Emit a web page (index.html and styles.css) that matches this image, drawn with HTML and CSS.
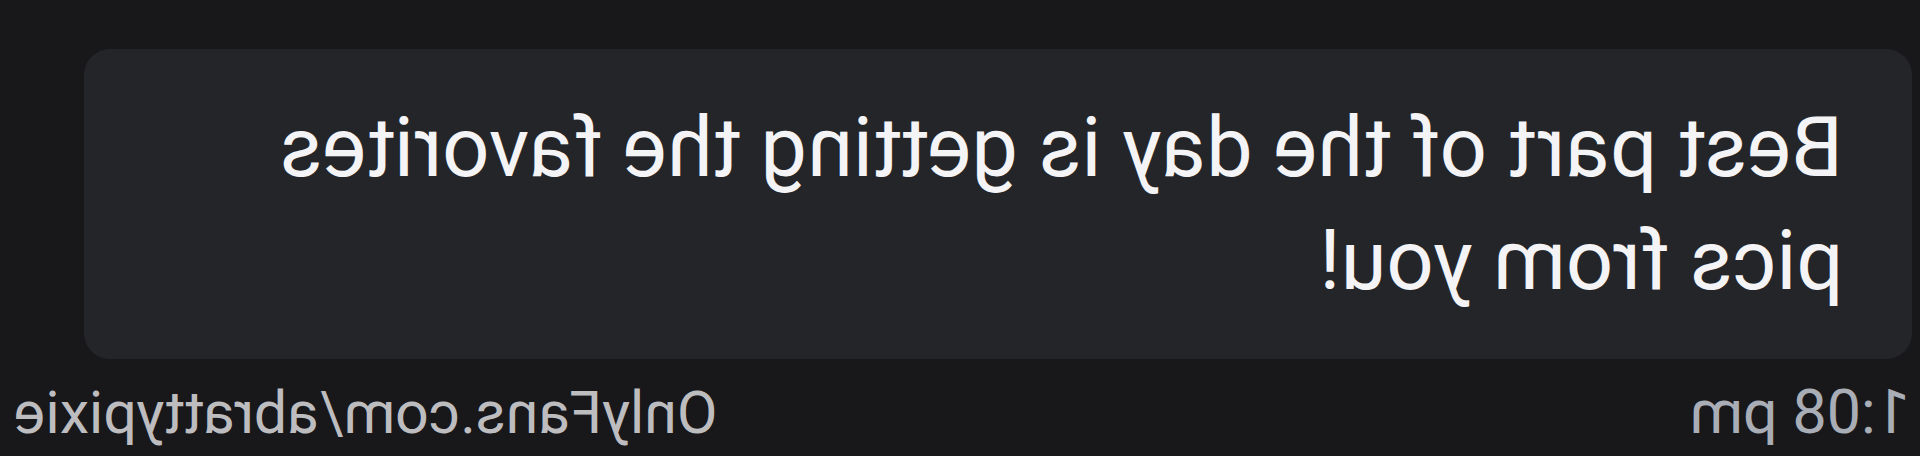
FILE: index.html
```html
<!DOCTYPE html>
<html lang="en">
<head>
<meta charset="utf-8">
<title>Message</title>
<link rel="stylesheet" href="styles.css">
</head>
<body>
<div class="screen">
  <div class="thread">
    <div class="bubble">
      <p class="message">Best part of the day is getting the favorites pics from you!</p>
    </div>
    <div class="meta">
      <span class="time">1:08 pm</span>
      <span class="source">OnlyFans.com/abrattypixie</span>
    </div>
  </div>
</div>
</body>
</html>
```

FILE: styles.css
```css
html, body {
  margin: 0;
  padding: 0;
  background: #18181b;
}

/* the conversation view is drawn mirrored */
.screen {
  width: 1920px;
  height: 456px;
  overflow: hidden;
  transform: scaleX(-1);
  font-family: Roboto, "Noto Sans", sans-serif;
  background: #18181b;
}

.thread {
  padding: 49px 84px 0 8px;
  display: flex;
  flex-direction: column;
}

.bubble {
  background: #242529;
  border-radius: 26px;
  padding: 42px 120px 42px 69px;
}

.message {
  margin: 0;
  font-size: 83px;
  line-height: 113px;
  color: #f4f4f6;
}

.meta {
  display: flex;
  justify-content: space-between;
  align-items: baseline;
  margin: 18px -70px 0 0;
  padding-left: 2px;
}

.time {
  font-size: 61px;
  line-height: 70px;
  color: #a9adb5;
}

.source {
  font-size: 59px;
  line-height: 70px;
  color: #bdbdc0;
}
```
